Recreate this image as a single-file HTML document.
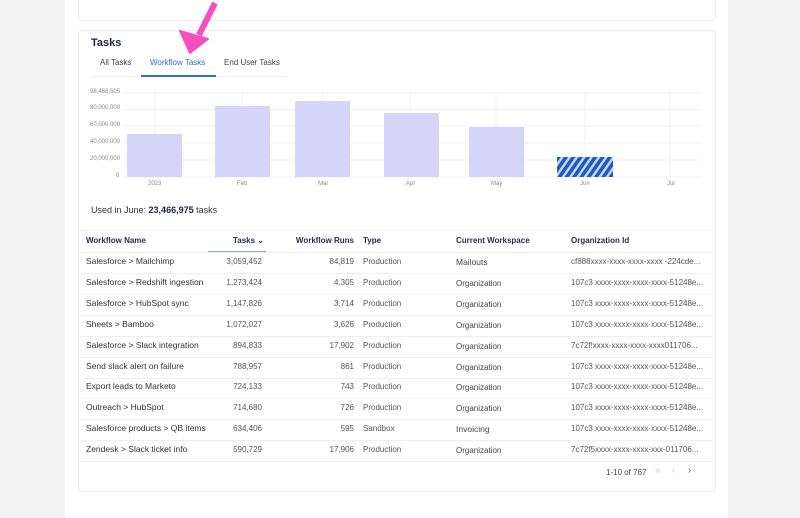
<!DOCTYPE html>
<html><head><style>
*{margin:0;padding:0;box-sizing:border-box}
body{width:800px;height:518px;background:#f2f2f2;font-family:"Liberation Sans",sans-serif;position:relative;overflow:hidden;color:#222}
.panel{position:absolute;left:65px;top:0;width:663px;height:518px;background:#fff}
.card{position:absolute;border:1px solid #ececec;border-radius:4px;background:#fff}
.a{position:absolute;white-space:nowrap}
.ax{position:absolute;font-size:6px;color:#888}
.hd{font-size:8px;color:#2a2d4a;font-weight:bold}
.td{font-size:8.5px;color:#333}
.sm{font-size:8px;color:#555}
.row{position:absolute;left:80px;width:632px;height:1px;background:#eee}
</style></head><body>
<div class="panel"></div>
<div class="card" style="left:78px;top:-5px;width:638px;height:26px"></div>
<div class="card" style="left:78px;top:30px;width:638px;height:462px"></div>
<div class="a" style="left:91px;top:37px;font-size:11px;font-weight:bold;color:#1f2340">Tasks</div>
<div class="a" style="left:100px;top:58px;font-size:8px;color:#444">All Tasks</div>
<div class="a" style="left:150px;top:58px;font-size:8px;color:#2a6fdb">Workflow Tasks</div>
<div class="a" style="left:224px;top:58px;font-size:8px;color:#444">End User Tasks</div>
<div class="a" style="left:91px;top:76px;width:195px;height:1px;background:#eee"></div>
<div class="a" style="left:141px;top:75px;width:75px;height:2px;background:#2a6fdb"></div>
<svg class="a" style="left:0;top:0" width="800" height="518">
<defs><pattern id="h" width="6" height="6" patternUnits="userSpaceOnUse" patternTransform="rotate(35)"><rect width="6" height="6" fill="#c7d3ee"/><rect width="3.5" height="6" fill="#1a5bbf"/></pattern></defs>
<g stroke="#f0f0f0" stroke-width="1">
<line x1="123" y1="93" x2="701" y2="93"/><line x1="123" y1="109.5" x2="701" y2="109.5"/><line x1="123" y1="126" x2="701" y2="126"/><line x1="123" y1="143" x2="701" y2="143"/><line x1="123" y1="160" x2="701" y2="160"/><line x1="123" y1="177" x2="701" y2="177"/>
<line x1="155" y1="93" x2="155" y2="177"/><line x1="242" y1="93" x2="242" y2="177"/><line x1="322" y1="93" x2="322" y2="177"/><line x1="410" y1="93" x2="410" y2="177"/><line x1="496" y1="93" x2="496" y2="177"/><line x1="585" y1="93" x2="585" y2="177"/><line x1="670" y1="93" x2="670" y2="177"/>
</g>
<g fill="#d4d5f8">
<rect x="127" y="134" width="55" height="43"/><rect x="215" y="106" width="55" height="71"/><rect x="295" y="101" width="55" height="76"/><rect x="384" y="113" width="55" height="64"/><rect x="469" y="127" width="55" height="50"/>
</g>
<rect x="557" y="157" width="56" height="20" fill="url(#h)"/>
<path d="M215 3 L199 35" stroke="#f550c0" stroke-width="6"/>
<path d="M180 31 L190 53 L208 39 Z" fill="#f550c0" stroke="#f550c0" stroke-width="2" stroke-linejoin="round"/>
</svg>
<div class="ax" style="left:90px;top:89px">98,468,505</div>
<div class="ax" style="left:90px;top:105px">80,000,000</div>
<div class="ax" style="left:90px;top:122px">60,000,000</div>
<div class="ax" style="left:90px;top:139px">40,000,000</div>
<div class="ax" style="left:90px;top:156px">20,000,000</div>
<div class="ax" style="left:116px;top:173px">0</div>
<div class="ax" style="left:148px;top:181px">2023</div>
<div class="ax" style="left:237px;top:181px">Feb</div>
<div class="ax" style="left:318px;top:181px">Mar</div>
<div class="ax" style="left:406px;top:181px">Apr</div>
<div class="ax" style="left:491px;top:181px">May</div>
<div class="ax" style="left:580px;top:181px">Jun</div>
<div class="ax" style="left:667px;top:181px">Jul</div>
<div class="a" style="left:91px;top:205px;font-size:9px;color:#333">Used in June: <b style="color:#1f2340">23,466,975</b> tasks</div>
<div class="row" style="top:230px"></div>
<div class="a hd" style="left:86px;top:236px">Workflow Name</div>
<div class="a hd" style="left:208px;top:236px;width:56px;text-align:right">Tasks &#8964;</div>
<div class="a" style="left:208px;top:251px;width:58px;height:1px;background:#9aa"></div>
<div class="a hd" style="left:280px;top:236px;width:74px;text-align:right">Workflow Runs</div>
<div class="a hd" style="left:363px;top:236px">Type</div>
<div class="a hd" style="left:456px;top:236px">Current Workspace</div>
<div class="a hd" style="left:571px;top:236px">Organization Id</div>
<div class="row" style="top:252px"></div>
<div id="rows"></div>
<script>
var d=[["Salesforce > Mailchimp","3,059,452","84,819","Production","Mailouts","cf888xxxx-xxxx-xxxx-xxxx -224cde..."],
["Salesforce > Redshift ingestion","1,273,424","4,305","Production","Organization","107c3 xxxx-xxxx-xxxx-xxxx-51248e..."],
["Salesforce > HubSpot sync","1,147,826","3,714","Production","Organization","107c3 xxxx-xxxx-xxxx-xxxx-51248e..."],
["Sheets > Bamboo","1,072,027","3,626","Production","Organization","107c3 xxxx-xxxx-xxxx-xxxx-51248e..."],
["Salesforce > Slack integration","894,833","17,902","Production","Organization","7c72f!xxxx-xxxx-xxxx-xxxx011706..."],
["Send slack alert on failure","788,957","861","Production","Organization","107c3 xxxx-xxxx-xxxx-xxxx-51248e..."],
["Export leads to Marketo","724,133","743","Production","Organization","107c3 xxxx-xxxx-xxxx-xxxx-51248e..."],
["Outreach > HubSpot","714,680","726","Production","Organization","107c3 xxxx-xxxx-xxxx-xxxx-51248e..."],
["Salesforce products > QB items","634,406","595","Sandbox","Invoicing","107c3 xxxx-xxxx-xxxx-xxxx-51248e..."],
["Zendesk > Slack ticket info","590,729","17,906","Production","Organization","7c72f5xxxx-xxxx-xxxx-xxx-011706..."]];
var h="";
d.forEach(function(r,i){var y=256+i*20.9;
var big=(r[4]!="Organization");
h+='<div class="a td" style="left:86px;top:'+y+'px">'+r[0].replace(/>/g,"&gt;")+'</div>';
h+='<div class="a sm" style="left:200px;top:'+(y+1)+'px;width:62px;text-align:right">'+r[1]+'</div>';
h+='<div class="a sm" style="left:290px;top:'+(y+1)+'px;width:64px;text-align:right">'+r[2]+'</div>';
h+='<div class="a sm" style="left:363px;top:'+(y+1)+'px">'+r[3]+'</div>';
h+='<div class="a '+(big?'td':'sm')+'" style="left:456px;top:'+(y+(big?1:2))+'px;color:#444">'+r[4]+'</div>';
h+='<div class="a sm" style="left:571px;top:'+(y+1)+'px">'+r[5]+'</div>';
h+='<div class="row" style="top:'+(y+17)+'px"></div>';});
document.getElementById("rows").innerHTML=h;
</script>
<div class="a sm" style="left:606px;top:468px;color:#444">1-10 of 767</div>
<div class="a" style="left:655px;top:465px;font-size:10px;color:#ccc">&laquo;</div>
<div class="a" style="left:672px;top:465px;font-size:10px;color:#ccc">&lsaquo;</div>
<div class="a" style="left:688px;top:465px;font-size:10px;color:#666">&rsaquo;</div>
</body></html>
